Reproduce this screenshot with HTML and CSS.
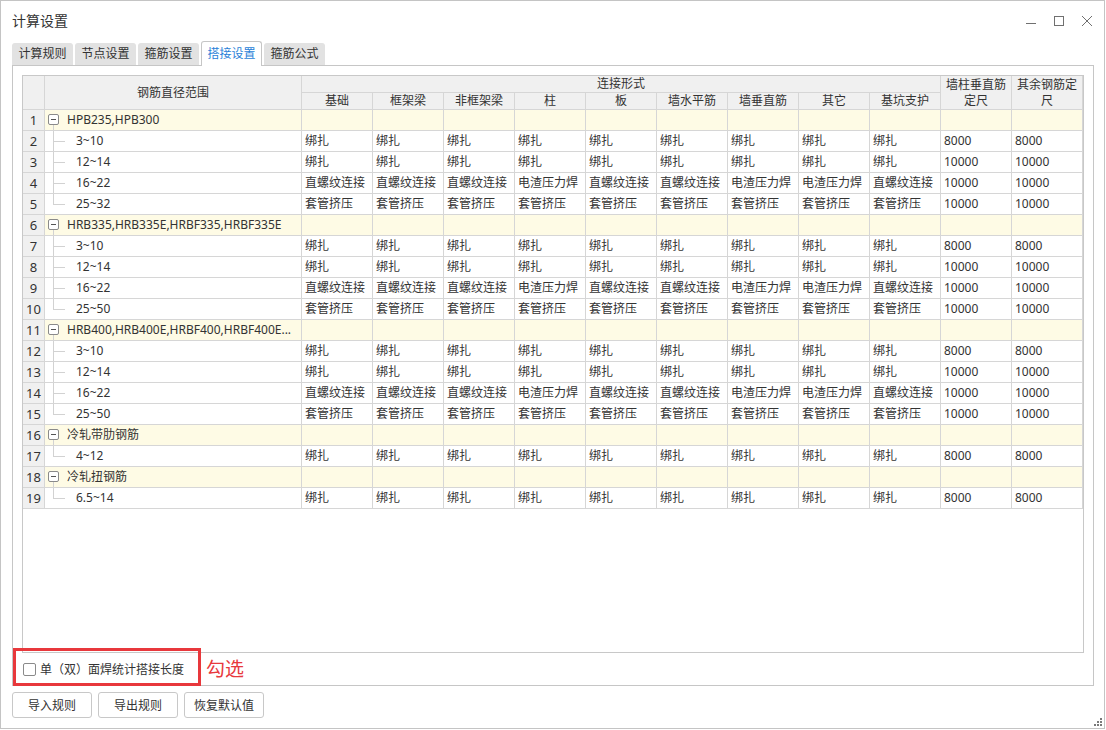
FILE: index.html
```html
<!DOCTYPE html>
<html lang="zh-CN">
<head>
<meta charset="utf-8">
<title>计算设置</title>
<link rel="stylesheet" href="styles.css">
</head>
<body>
<div class="window">
  <div class="titlebar">
    <span class="title">计算设置</span>
    <div class="controls">
      <svg class="ctl" width="12" height="12" viewBox="0 0 12 12"><path d="M1 8.5H11" stroke="#707070" stroke-width="1" fill="none"/></svg>
      <svg class="ctl" width="12" height="12" viewBox="0 0 12 12"><rect x="1.5" y="1.5" width="9" height="9" stroke="#707070" stroke-width="1" fill="none"/></svg>
      <svg class="ctl" width="12" height="12" viewBox="0 0 12 12"><path d="M1 1L11 11M11 1L1 11" stroke="#707070" stroke-width="1" fill="none"/></svg>
    </div>
  </div>
  <div class="tabs">
    <div class="tab">计算规则</div>
    <div class="tab">节点设置</div>
    <div class="tab">箍筋设置</div>
    <div class="tab active">搭接设置</div>
    <div class="tab">箍筋公式</div>
  </div>
  <div class="panel">
    <div class="frame">
      <table class="grid">
        <colgroup>
          <col class="c-num"><col class="c-name">
          <col class="c-w"><col class="c-w"><col class="c-w"><col class="c-w"><col class="c-w"><col class="c-w"><col class="c-w"><col class="c-w"><col class="c-w"><col class="c-w"><col class="c-w">
        </colgroup>
        <thead>
          <tr>
            <th rowspan="2"></th>
            <th rowspan="2">钢筋直径范围</th>
            <th colspan="9">连接形式</th>
            <th rowspan="2" class="wrap">墙柱垂直筋定尺</th>
            <th rowspan="2" class="wrap">其余钢筋定尺</th>
          </tr>
          <tr>
            <th>基础</th><th>框架梁</th><th>非框架梁</th><th>柱</th><th>板</th><th>墙水平筋</th><th>墙垂直筋</th><th>其它</th><th>基坑支护</th>
          </tr>
        </thead>
        <tbody>
          <tr class="grp"><td class="n">1</td><td class="name"><span class="toggle"></span>HPB235,HPB300</td><td></td><td></td><td></td><td></td><td></td><td></td><td></td><td></td><td></td><td></td><td></td></tr>
          <tr><td class="n">2</td><td class="name"><span class="guide"></span>3~10</td><td>绑扎</td><td>绑扎</td><td>绑扎</td><td>绑扎</td><td>绑扎</td><td>绑扎</td><td>绑扎</td><td>绑扎</td><td>绑扎</td><td>8000</td><td>8000</td></tr>
          <tr><td class="n">3</td><td class="name"><span class="guide"></span>12~14</td><td>绑扎</td><td>绑扎</td><td>绑扎</td><td>绑扎</td><td>绑扎</td><td>绑扎</td><td>绑扎</td><td>绑扎</td><td>绑扎</td><td>10000</td><td>10000</td></tr>
          <tr><td class="n">4</td><td class="name"><span class="guide"></span>16~22</td><td>直螺纹连接</td><td>直螺纹连接</td><td>直螺纹连接</td><td>电渣压力焊</td><td>直螺纹连接</td><td>直螺纹连接</td><td>电渣压力焊</td><td>电渣压力焊</td><td>直螺纹连接</td><td>10000</td><td>10000</td></tr>
          <tr><td class="n">5</td><td class="name"><span class="guide last"></span>25~32</td><td>套管挤压</td><td>套管挤压</td><td>套管挤压</td><td>套管挤压</td><td>套管挤压</td><td>套管挤压</td><td>套管挤压</td><td>套管挤压</td><td>套管挤压</td><td>10000</td><td>10000</td></tr>
          <tr class="grp"><td class="n">6</td><td class="name"><span class="toggle"></span>HRB335,HRB335E,HRBF335,HRBF335E</td><td></td><td></td><td></td><td></td><td></td><td></td><td></td><td></td><td></td><td></td><td></td></tr>
          <tr><td class="n">7</td><td class="name"><span class="guide"></span>3~10</td><td>绑扎</td><td>绑扎</td><td>绑扎</td><td>绑扎</td><td>绑扎</td><td>绑扎</td><td>绑扎</td><td>绑扎</td><td>绑扎</td><td>8000</td><td>8000</td></tr>
          <tr><td class="n">8</td><td class="name"><span class="guide"></span>12~14</td><td>绑扎</td><td>绑扎</td><td>绑扎</td><td>绑扎</td><td>绑扎</td><td>绑扎</td><td>绑扎</td><td>绑扎</td><td>绑扎</td><td>10000</td><td>10000</td></tr>
          <tr><td class="n">9</td><td class="name"><span class="guide"></span>16~22</td><td>直螺纹连接</td><td>直螺纹连接</td><td>直螺纹连接</td><td>电渣压力焊</td><td>直螺纹连接</td><td>直螺纹连接</td><td>电渣压力焊</td><td>电渣压力焊</td><td>直螺纹连接</td><td>10000</td><td>10000</td></tr>
          <tr><td class="n">10</td><td class="name"><span class="guide last"></span>25~50</td><td>套管挤压</td><td>套管挤压</td><td>套管挤压</td><td>套管挤压</td><td>套管挤压</td><td>套管挤压</td><td>套管挤压</td><td>套管挤压</td><td>套管挤压</td><td>10000</td><td>10000</td></tr>
          <tr class="grp"><td class="n">11</td><td class="name"><span class="toggle"></span>HRB400,HRB400E,HRBF400,HRBF400E...</td><td></td><td></td><td></td><td></td><td></td><td></td><td></td><td></td><td></td><td></td><td></td></tr>
          <tr><td class="n">12</td><td class="name"><span class="guide"></span>3~10</td><td>绑扎</td><td>绑扎</td><td>绑扎</td><td>绑扎</td><td>绑扎</td><td>绑扎</td><td>绑扎</td><td>绑扎</td><td>绑扎</td><td>8000</td><td>8000</td></tr>
          <tr><td class="n">13</td><td class="name"><span class="guide"></span>12~14</td><td>绑扎</td><td>绑扎</td><td>绑扎</td><td>绑扎</td><td>绑扎</td><td>绑扎</td><td>绑扎</td><td>绑扎</td><td>绑扎</td><td>10000</td><td>10000</td></tr>
          <tr><td class="n">14</td><td class="name"><span class="guide"></span>16~22</td><td>直螺纹连接</td><td>直螺纹连接</td><td>直螺纹连接</td><td>电渣压力焊</td><td>直螺纹连接</td><td>直螺纹连接</td><td>电渣压力焊</td><td>电渣压力焊</td><td>直螺纹连接</td><td>10000</td><td>10000</td></tr>
          <tr><td class="n">15</td><td class="name"><span class="guide last"></span>25~50</td><td>套管挤压</td><td>套管挤压</td><td>套管挤压</td><td>套管挤压</td><td>套管挤压</td><td>套管挤压</td><td>套管挤压</td><td>套管挤压</td><td>套管挤压</td><td>10000</td><td>10000</td></tr>
          <tr class="grp"><td class="n">16</td><td class="name"><span class="toggle"></span>冷轧带肋钢筋</td><td></td><td></td><td></td><td></td><td></td><td></td><td></td><td></td><td></td><td></td><td></td></tr>
          <tr><td class="n">17</td><td class="name"><span class="guide last"></span>4~12</td><td>绑扎</td><td>绑扎</td><td>绑扎</td><td>绑扎</td><td>绑扎</td><td>绑扎</td><td>绑扎</td><td>绑扎</td><td>绑扎</td><td>8000</td><td>8000</td></tr>
          <tr class="grp"><td class="n">18</td><td class="name"><span class="toggle"></span>冷轧扭钢筋</td><td></td><td></td><td></td><td></td><td></td><td></td><td></td><td></td><td></td><td></td><td></td></tr>
          <tr><td class="n">19</td><td class="name"><span class="guide last"></span>6.5~14</td><td>绑扎</td><td>绑扎</td><td>绑扎</td><td>绑扎</td><td>绑扎</td><td>绑扎</td><td>绑扎</td><td>绑扎</td><td>绑扎</td><td>8000</td><td>8000</td></tr>
        </tbody>
      </table>
    </div>
    <div class="opt">
      <span class="cb"></span>
      <span class="cb-label">单（双）面焊统计搭接长度</span>
      <span class="note">勾选</span>
    </div>
  </div>
  <div class="buttons">
    <button class="btn">导入规则</button>
    <button class="btn">导出规则</button>
    <button class="btn">恢复默认值</button>
  </div>
  <div class="mark"></div>
  <svg class="grip" width="8" height="8" viewBox="0 0 8 8">
    <rect x="6" y="0" width="2" height="2" fill="#7a7a7a"/>
    <rect x="3" y="3" width="2" height="2" fill="#7a7a7a"/>
    <rect x="6" y="3" width="2" height="2" fill="#7a7a7a"/>
    <rect x="0" y="6" width="2" height="2" fill="#7a7a7a"/>
    <rect x="3" y="6" width="2" height="2" fill="#7a7a7a"/>
    <rect x="6" y="6" width="2" height="2" fill="#7a7a7a"/>
  </svg>
</div>
</body>
</html>
```

FILE: styles.css
```css
* { box-sizing: border-box; }

html, body {
  margin: 0;
  padding: 0;
  background: #ffffff;
}

body {
  font-family: "Noto Sans", "Noto Sans CJK SC", sans-serif;
  font-size: 12px;
  color: #333333;
}

.window {
  position: relative;
  width: 1105px;
  height: 729px;
  border: 1px solid #c4c4c4;
  background: #ffffff;
}

.titlebar {
  height: 40px;
  display: flex;
  align-items: center;
  justify-content: space-between;
  padding: 0 11px 0 11px;
}

.title {
  font-size: 14px;
  line-height: 20px;
  color: #333333;
}

.controls {
  display: flex;
  align-items: center;
  gap: 16px;
}

.ctl { display: block; }

.tabs {
  height: 24px;
  display: flex;
  align-items: flex-end;
  gap: 2px;
  padding-left: 11px;
}

.tab {
  width: 61px;
  height: 22px;
  line-height: 22px;
  text-align: center;
  background: #e2e2e2;
  border-radius: 3px 3px 0 0;
  color: #333333;
  font-size: 12px;
}

.tab.active {
  position: relative;
  z-index: 1;
  height: 25px;
  line-height: 24px;
  margin-bottom: -1px;
  background: #ffffff;
  border: 1px solid #c6c6c6;
  border-bottom: none;
  color: #2a7fd8;
}

.panel {
  margin-left: 11px;
  width: 1082px;
  height: 621px;
  border: 1px solid #c6c6c6;
  padding: 9px 9px 0 9px;
  display: flex;
  flex-direction: column;
}

.frame {
  height: 578px;
  border: 1px solid #c8c8c8;
  background: #ffffff;
  overflow: hidden;
}

.grid {
  table-layout: fixed;
  width: 1060px;
  border-collapse: separate;
  border-spacing: 0;
}

.c-num { width: 22px; }
.c-name { width: 257px; }
.c-w { width: 71px; }

.grid th, .grid td {
  border-right: 1px solid #d6d6d6;
  border-bottom: 1px solid #d6d6d6;
  font-weight: normal;
  white-space: nowrap;
  overflow: hidden;
}

.grid th {
  height: 17px;
  line-height: 16px;
  padding: 0 2px;
  background: #f0f0f0;
  text-align: center;
  color: #333333;
  font-size: 12px;
}

.grid th.wrap {
  white-space: normal;
  line-height: 16px;
}

.grid td {
  height: 21px;
  line-height: 20px;
  padding: 0 0 0 3px;
  text-align: left;
  color: #333333;
  font-size: 12px;
  text-overflow: ellipsis;
}

.grid td.n {
  background: #f0f0f0;
  text-align: center;
  padding: 0;
  font-size: 13px;
}

.grid tr.grp td {
  background-color: #fefbe5;
}

.grid tr.grp td.n {
  background-color: #f0f0f0;
}

.grid tr.grp td.name {
  padding-left: 3px;
  background-image: linear-gradient(#d2d2d2, #d2d2d2);
  background-repeat: no-repeat;
  background-position: 8px 15px;
  background-size: 1px 6px;
}

.grid td.name {
  padding-left: 8px;
}

.toggle {
  display: inline-block;
  vertical-align: top;
  width: 11px;
  height: 11px;
  margin-top: 4px;
  margin-right: 8px;
  border: 1px solid #8a8a8a;
  border-radius: 2px;
  background: linear-gradient(#555555, #555555) no-repeat 2px 4px / 5px 1px, #ffffff;
}

.guide {
  display: inline-block;
  vertical-align: top;
  width: 12px;
  height: 20px;
  margin-right: 11px;
  background-image: linear-gradient(#d2d2d2, #d2d2d2), linear-gradient(#d2d2d2, #d2d2d2);
  background-repeat: no-repeat;
  background-position: 0 0, 0 10px;
  background-size: 1px 20px, 12px 1px;
}

.guide.last {
  background-size: 1px 11px, 12px 1px;
}

.opt {
  height: 32px;
  display: flex;
  align-items: center;
}

.cb {
  width: 13px;
  height: 13px;
  margin-left: 1px;
  border: 1px solid #8a8a8a;
  border-radius: 2px;
  background: #ffffff;
}

.cb-label {
  margin-left: 4px;
  font-size: 12px;
  color: #333333;
}

.note {
  margin-left: 22px;
  font-size: 19px;
  line-height: 20px;
  color: #e8383c;
}

.buttons {
  display: flex;
  gap: 6px;
  margin-top: 6px;
  padding-left: 11px;
}

.btn {
  width: 80px;
  height: 26px;
  border: 1px solid #c8c8c8;
  border-radius: 3px;
  background: #ffffff;
  font-family: "Noto Sans", "Noto Sans CJK SC", sans-serif;
  font-size: 12px;
  color: #333333;
  padding: 0;
}

.mark {
  position: absolute;
  left: 12px;
  top: 647px;
  width: 188px;
  height: 38px;
  border: 3px solid #e8383c;
}

.grip {
  position: absolute;
  right: 2px;
  bottom: 2px;
}
```
